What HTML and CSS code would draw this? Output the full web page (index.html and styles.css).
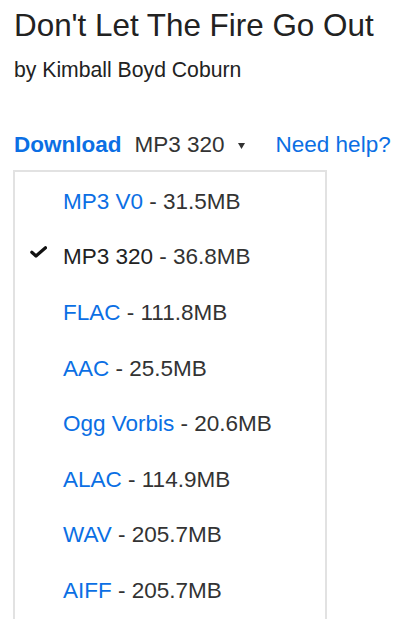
FILE: index.html
```html
<!DOCTYPE html>
<html>
<head>
<meta charset="utf-8">
<link rel="stylesheet" href="styles.css">
</head>
<body>
<div class="page">
  <h1 class="title">Don't Let The Fire Go Out</h1>
  <div class="artist">by Kimball Boyd Coburn</div>
  <div class="dl-row">
    <span class="dl-label">Download</span>
    <span class="format">MP3 320</span>
    <svg class="caret" width="7" height="6" viewBox="0 0 7 6"><path d="M0 0 H7 L3.5 6 Z" fill="#333"/></svg>
    <a class="help">Need help?</a>
  </div>
  <ul class="menu">
    <li class="item"><span class="check"></span><span class="name">MP3 V0</span><span class="size"> - 31.5MB</span></li>
    <li class="item selected"><span class="check"><svg width="17" height="13" viewBox="0 0 17 13"><path d="M1.8 6.2 L6 10 L15.5 1.8" fill="none" stroke="#111" stroke-width="3.2" stroke-linecap="round" stroke-linejoin="round"/></svg></span><span class="name">MP3 320</span><span class="size"> - 36.8MB</span></li>
    <li class="item"><span class="check"></span><span class="name">FLAC</span><span class="size"> - 111.8MB</span></li>
    <li class="item"><span class="check"></span><span class="name">AAC</span><span class="size"> - 25.5MB</span></li>
    <li class="item"><span class="check"></span><span class="name">Ogg Vorbis</span><span class="size"> - 20.6MB</span></li>
    <li class="item"><span class="check"></span><span class="name">ALAC</span><span class="size"> - 114.9MB</span></li>
    <li class="item"><span class="check"></span><span class="name">WAV</span><span class="size"> - 205.7MB</span></li>
    <li class="item"><span class="check"></span><span class="name">AIFF</span><span class="size"> - 205.7MB</span></li>
  </ul>
</div>
</body>
</html>
```
FILE: styles.css
```css
html, body {
  margin: 0;
  padding: 0;
  background: #fff;
}
body {
  font-family: "Liberation Sans", Arial, sans-serif;
  color: #333;
}
.page {
  padding: 8px 0 0 14px;
}
.title {
  margin: 0;
  font-size: 31.4px;
  line-height: 36px;
  font-weight: normal;
  color: #222;
}
.artist {
  margin-top: 14px;
  font-size: 21.2px;
  line-height: 24px;
  color: #222;
}
.dl-row {
  margin-top: 50px;
  display: flex;
  align-items: center;
  font-size: 22.5px;
  line-height: 26px;
}
.dl-label {
  font-weight: bold;
  color: #0b6fe4;
}
.format {
  margin-left: 13px;
  color: #333;
}
.caret {
  margin-left: 13px;
  margin-top: 2px;
}
.help {
  margin-left: 31px;
  color: #0b6fe4;
}
.menu {
  list-style: none;
  margin: 12px 0 0 -1px;
  padding: 2px 0 0;
  width: 310px;
  border: 2px solid #e2e2e2;
  border-bottom: none;
  font-size: 22.5px;
  line-height: 26px;
}
.item {
  display: flex;
  align-items: center;
  padding: 14.8px 0;
}
.check {
  width: 48px;
  padding-left: 15px;
  box-sizing: border-box;
  display: flex;
  align-items: center;
  height: 26px;
  margin-top: -10px;
}
.name {
  color: #0b6fe4;
}
.selected .name {
  color: #222;
}
.size {
  color: #333;
  white-space: pre;
}
```
